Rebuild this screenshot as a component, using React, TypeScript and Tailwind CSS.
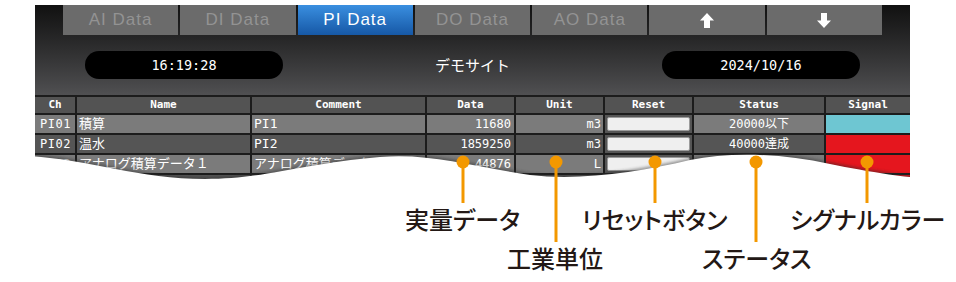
const tabs = ["AI Data", "DI Data", "PI Data", "DO Data", "AO Data"];

const rows = [
  { ch: "PI01", name: "積算", comment: "PI1", data: "11680", unit: "m3", status: "20000以下", signal: "bg-[#6ec6d2]" },
  { ch: "PI02", name: "温水", comment: "PI2", data: "1859250", unit: "m3", status: "40000達成", signal: "bg-[#e5161e]" },
  { ch: "PI03", name: "アナログ積算データ１", comment: "アナログ積算データ１", data: "44876", unit: "L", status: "", signal: "bg-[#e5161e]" },
  { ch: "PI04", name: "", comment: "", data: "", unit: "", status: "", signal: "bg-[#e5161e]" },
];

const headers = ["Ch", "Name", "Comment", "Data", "Unit", "Reset", "Status", "Signal"];

const mono = "font-['DejaVu_Sans_Mono','Noto_Sans_CJK_JP',monospace]";

const ArrowUp = () => (
  <svg width="14" height="15" viewBox="0 0 14 15">
    <path d="M7 0 L14 7.5 L10 7.5 L10 15 L4 15 L4 7.5 L0 7.5 Z" fill="#fff" />
  </svg>
);

const ArrowDown = () => (
  <svg width="14" height="15" viewBox="0 0 14 15">
    <path d="M7 15 L14 7.5 L10 7.5 L10 0 L4 0 L4 7.5 L0 7.5 Z" fill="#fff" />
  </svg>
);

const callouts = [
  { x: 463, end: 203 },
  { x: 556, end: 242 },
  { x: 655, end: 203 },
  { x: 756, end: 242 },
  { x: 867, end: 203 },
];

const wave =
  "M0,150 L30,156 C90,160 140,179 205,179 C265,179 300,164 380,157 C430,153 470,166 530,175 C580,181 640,172 690,160 C730,152 780,153 830,164 C870,172 905,178 956,181 L956,282 L0,282 Z";

const label =
  "absolute font-['Noto_Sans_CJK_JP',sans-serif] text-[24px] leading-[26px] font-medium text-[#231815] [font-feature-settings:'palt']";

const App = () => {
  return (
    <div className="relative w-[956px] h-[282px] overflow-hidden bg-white">
      <div className="ml-[35px] mt-[5px] w-[875px]">
        {/* header: tabs + clock */}
        <div className="h-[90px] bg-linear-to-b from-[#111111] to-[#505052]">
          <div className="flex h-[30px] gap-[2px] px-[28px]">
            {tabs.map((t) => (
              <div
                key={t}
                className={
                  t === "PI Data"
                    ? "flex flex-1 items-center justify-center bg-linear-to-b from-[#3a8fe0] to-[#1658a6] font-['Liberation_Sans',sans-serif] text-[17px] tracking-[1px] text-white"
                    : "flex flex-1 items-center justify-center bg-[#6b6b6b] font-['Liberation_Sans',sans-serif] text-[17px] tracking-[1px] text-[#939393]"
                }
              >
                {t}
              </div>
            ))}
            <div className="flex flex-1 items-center justify-center bg-[#6b6b6b]">
              <ArrowUp />
            </div>
            <div className="flex flex-1 items-center justify-center bg-[#6b6b6b]">
              <ArrowDown />
            </div>
          </div>
          <div className="flex h-[60px] items-center justify-between px-[50px]">
            <div className={`flex h-[28px] w-[198px] items-center justify-center rounded-full bg-black text-[13.5px] text-white ${mono}`}>
              16:19:28
            </div>
            <div className="font-['Noto_Sans_CJK_JP',sans-serif] text-[15px] text-white">デモサイト</div>
            <div className={`flex h-[28px] w-[198px] items-center justify-center rounded-full bg-black text-[13.5px] text-white ${mono}`}>
              2024/10/16
            </div>
          </div>
        </div>

        {/* table */}
        <div className={`grid grid-cols-[40px_173px_173px_87px_87px_87px_130px_84px] gap-[2px] bg-[#1c1c1c] pt-[2px] ${mono}`}>
          {headers.map((h) => (
            <div key={h} className="flex h-[16px] items-center justify-center bg-[#535353] text-[11px] font-bold text-white">
              {h}
            </div>
          ))}
          {rows.map((r, i) => {
            const bg = i % 2 === 0 ? "bg-[#7b7b7b]" : "bg-[#555555]";
            return [
              <div key={`ch${i}`} className={`flex h-[18px] items-center pl-[5px] text-[12px] tracking-[0.5px] text-white ${bg}`}>{r.ch}</div>,
              <div key={`nm${i}`} className={`flex h-[18px] items-center pl-[2px] text-[13px] text-white ${bg}`}>{r.name}</div>,
              <div key={`cm${i}`} className={`flex h-[18px] items-center pl-[2px] text-[13px] text-white ${bg}`}>{r.comment}</div>,
              <div key={`dt${i}`} className={`flex h-[18px] items-center justify-end pr-[3px] text-[12px] text-white ${bg}`}>{r.data}</div>,
              <div key={`un${i}`} className={`flex h-[18px] items-center justify-end pr-[2px] text-[12px] text-white ${bg}`}>{r.unit}</div>,
              <div key={`rs${i}`} className="h-[18px] bg-[#555555] p-[2px]">
                <div className="h-full w-full rounded-[2px] border border-[#9a9a9a] bg-[#efefef]" />
              </div>,
              <div key={`st${i}`} className={`flex h-[18px] items-center justify-center text-[12px] text-white ${bg}`}>{r.status}</div>,
              <div key={`sg${i}`} className={`h-[18px] ${r.signal}`} />,
            ];
          })}
        </div>
      </div>

      {/* torn-paper cut and callouts */}
      <svg className="pointer-events-none absolute left-0 top-0" width="956" height="282" viewBox="0 0 956 282">
        <defs>
          <filter id="soft" x="-5%" y="-20%" width="110%" height="140%">
            <feGaussianBlur stdDeviation="1.5" />
          </filter>
          <clipPath id="panel">
            <rect x="35" y="0" width="875" height="282" />
          </clipPath>
        </defs>
        <path d={wave} fill="#2a2a2a" opacity="0.45" transform="translate(0,-2)" filter="url(#soft)" clipPath="url(#panel)" />
        <path d={wave} fill="#ffffff" />
        {callouts.map((c) => (
          <g key={c.x}>
            <line x1={c.x} y1={162} x2={c.x} y2={c.end} stroke="#f39800" strokeWidth="3" />
            <circle cx={c.x} cy={162} r="6.5" fill="#f39800" />
          </g>
        ))}
      </svg>

      <span className={`${label} left-[405px] top-[206px]`}>実量データ</span>
      <span className={`${label} left-[507px] top-[245px]`}>工業単位</span>
      <span className={`${label} left-[582px] top-[206px]`}>リセットボタン</span>
      <span className={`${label} left-[702px] top-[245px]`}>ステータス</span>
      <span className={`${label} left-[790px] top-[206px]`}>シグナルカラー</span>
    </div>
  );
};

export default App;
